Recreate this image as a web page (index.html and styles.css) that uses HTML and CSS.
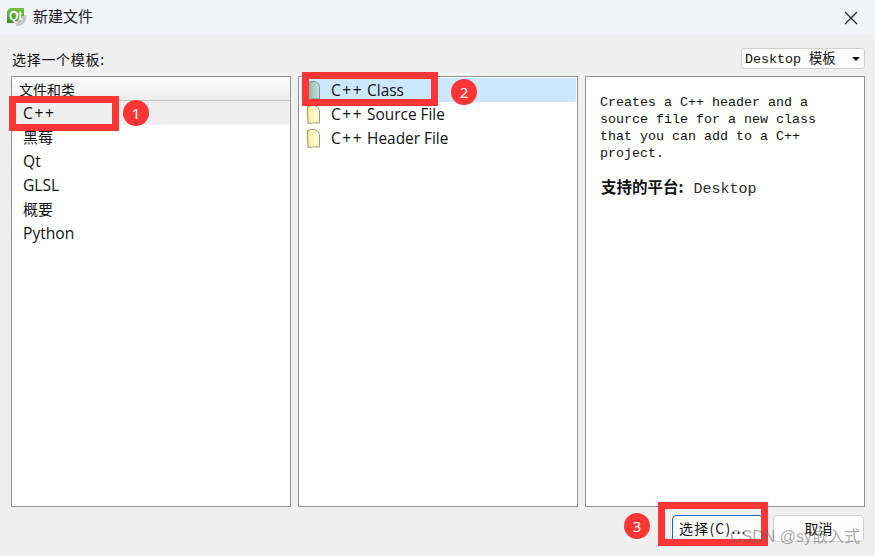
FILE: index.html
```html
<!DOCTYPE html>
<html lang="zh">
<head>
<meta charset="utf-8">
<title>新建文件</title>
<link rel="stylesheet" href="styles.css">
</head>
<body>
<svg class="defs" width="0" height="0">
  <defs>
    <linearGradient id="yellow" x1="0" y1="0" x2="1" y2="0">
      <stop offset="0" stop-color="#e9d890"/><stop offset="0.3" stop-color="#fbf7b4"/><stop offset="1" stop-color="#fffde6"/>
    </linearGradient>
    <linearGradient id="teal" x1="0" y1="0" x2="1" y2="0">
      <stop offset="0" stop-color="#7fb08f"/><stop offset="0.45" stop-color="#a5c9bc"/><stop offset="1" stop-color="#c3dfe8"/>
    </linearGradient>
    <linearGradient id="green" x1="0" y1="0" x2="0" y2="1">
      <stop offset="0" stop-color="#78c044"/><stop offset="1" stop-color="#3f8f24"/>
    </linearGradient>
  </defs>
</svg>
<div class="dialog">
  <header class="titlebar">
    <svg class="qt-logo" width="20" height="20" viewBox="0 0 20 20">
      <path d="M3 1H17V12L13 16H0V4Z" fill="url(#green)"/>
      <path d="M9 19C9 13 13 9 19.5 8C20 14 16 20 9 19Z" fill="#c4c8c2"/>
      <text x="2" y="12.5" class="qt-text">Qt</text>
    </svg>
    <span class="title">新建文件</span>
    <svg class="close" width="14" height="14" viewBox="0 0 14 14"><path d="M1 1L13 13M13 1L1 13" stroke="#222" stroke-width="1.1" fill="none"/></svg>
  </header>
  <main class="content">
    <div class="toprow">
      <span class="choose">选择一个模板:</span>
      <div class="combo"><span>Desktop 模板</span><i class="arrow"></i></div>
    </div>
    <div class="panels">
      <section class="panel">
        <div class="panel-head">文件和类</div>
        <ul class="cats">
          <li class="cat-active"><span class="cpp">C++</span></li>
          <li class="cjk">黑莓</li>
          <li>Qt</li>
          <li>GLSL</li>
          <li class="cjk">概要</li>
          <li>Python</li>
        </ul>
      </section>
      <section class="panel panel-files">
        <ul class="files">
          <li class="file-active"><svg class="doc" width="15" height="21" viewBox="0 0 15 21"><path d="M1.5 2.5Q5 1 9 1.5Q13 3 13.5 6.5V19Q7 18.5 2 19.5Q1 11 1.5 2.5Z" fill="url(#teal)" stroke="#7d9488"/></svg><span class="file-name"><span class="cpp">C++</span> Class</span></li>
          <li><svg class="doc" width="15" height="21" viewBox="0 0 15 21"><path d="M1.5 2.5Q5 1 9 1.5Q13 3 13.5 6.5V19Q7 18.5 2 19.5Q1 11 1.5 2.5Z" fill="url(#yellow)" stroke="#a8986e"/></svg><span class="file-name"><span class="cpp">C++</span> Source File</span></li>
          <li><svg class="doc" width="15" height="21" viewBox="0 0 15 21"><path d="M1.5 2.5Q5 1 9 1.5Q13 3 13.5 6.5V19Q7 18.5 2 19.5Q1 11 1.5 2.5Z" fill="url(#yellow)" stroke="#a8986e"/></svg><span class="file-name"><span class="cpp">C++</span> Header File</span></li>
        </ul>
      </section>
      <section class="panel panel-desc">
        <p class="desc">Creates a C++ header and a<br>source file for a new class<br>that you can add to a C++<br>project.</p>
        <p class="platform"><b>支持的平台:</b><span class="platform-name">Desktop</span></p>
      </section>
    </div>
    <div class="buttons">
      <button class="btn btn-primary">选择(C)...</button>
      <button class="btn">取消</button>
    </div>
  </main>
  <div class="mark mark-1"></div>
  <div class="mark mark-2"></div>
  <div class="mark mark-3"></div>
  <div class="badge badge-1">1</div>
  <div class="badge badge-2">2</div>
  <div class="badge badge-3">3</div>
  <div class="watermark">CSDN @sy嵌入式</div>
</div>
</body>
</html>
```
FILE: styles.css
```css
* { box-sizing: border-box; }
html, body { margin: 0; padding: 0; }
body { width: 875px; height: 556px; overflow: hidden; font-family: "Open Sans", "Noto Sans CJK SC", sans-serif; color: #111; }
.defs { position: absolute; }
.dialog { position: relative; width: 875px; height: 556px; display: flex; flex-direction: column; background: #f0f0f0; }
.titlebar { height: 35px; flex: none; background: #f3f4f9; display: flex; align-items: center; padding: 0 17px 0 7px; }
.qt-logo { flex: none; margin-bottom: 2px; }
.qt-text { font: bold 12px "Liberation Sans", sans-serif; fill: #fff; }
.title { margin-left: 6px; margin-bottom: 4px; font: 15px/20px "Noto Sans CJK SC", sans-serif; color: #1a1a1a; }
.close { margin-left: auto; }
.content { flex: 1; display: flex; flex-direction: column; padding: 13px 10px 0 11px; }
.toprow { height: 28px; flex: none; display: flex; justify-content: space-between; align-items: flex-start; }
.choose { font: 14px/20px "Noto Sans CJK SC", sans-serif; margin-top: 1px; margin-left: 1px; letter-spacing: 0.7px; }
.combo { width: 124px; height: 21px; border: 1px solid #d0d0d0; border-radius: 3px; background: #fdfdfd; display: flex; align-items: center; justify-content: space-between; padding: 1px 4px 0 3px; font: 13.33px/19px "Liberation Mono", "Noto Sans CJK SC", monospace; }
.arrow { width: 0; height: 0; border-left: 4px solid transparent; border-right: 4px solid transparent; border-top: 4px solid #111; }
.panels { height: 431px; flex: none; display: flex; gap: 7px; }
.panel { width: 280px; background: #fff; border: 1px solid #8f9299; }
.panel-head { height: 24px; padding-left: 7px; font-size: 14px; line-height: 25px; background: linear-gradient(#fff, #ececec); border-bottom: 1px solid #c4c4c4; }
.cats, .files { list-style: none; margin: 0; padding: 0; }
.cats li { height: 24px; padding-left: 11px; font-size: 15.6px; line-height: 24px; }
.cats .cjk { font-size: 15px; }
.cpp { letter-spacing: 1.6px; }
.cats .cat-active { background: #efefef; }
.files { padding: 1px 1px 0 2px; }
.files li { height: 24px; display: flex; align-items: center; padding-left: 5px; font-size: 15.4px; line-height: 24px; }
.file-name { padding-top: 2px; }
.files .file-active { background: #cce8ff; border-radius: 0 0 2px 2px; }
.doc { flex: none; margin-right: 10px; }
.panel-desc { padding: 17px 10px 0 14px; font: 13.33px/17px "Liberation Mono", "Noto Sans CJK SC", monospace; }
.desc { margin: 0; }
.platform { margin: 16px 0 0; display: flex; align-items: baseline; }
.platform b { font-family: "Noto Sans CJK SC", sans-serif; font-size: 15.5px; margin-left: 1px; }
.platform-name { margin-left: 10px; font-size: 15px; color: #2b2b2b; }
.buttons { display: flex; justify-content: flex-end; gap: 10px; padding-top: 8px; padding-right: 1px; }
.btn { width: 91px; height: 27px; border: 1px solid #d0d0d0; border-radius: 4px; background: #fdfdfd; font: 14px/22px "Noto Sans CJK SC", sans-serif; color: #111; padding: 0 0 2px; }
.btn-primary { border: 1.5px solid #0a6cc4; text-align: left; padding-left: 6px; letter-spacing: 1.2px; }
.mark { position: absolute; border: 7px solid #fc3535; }
.mark-1 { left: 9px; top: 96px; width: 110px; height: 35px; }
.mark-2 { left: 302px; top: 72px; width: 136px; height: 34px; }
.mark-3 { left: 658px; top: 502px; width: 110px; height: 44px; }
.badge { position: absolute; width: 26px; height: 26px; border-radius: 50%; background: #fc3535; color: #fff; font: 15px/26px "Noto Sans", sans-serif; text-align: center; }
.badge-1 { left: 123px; top: 100px; }
.badge-2 { left: 451px; top: 79px; }
.badge-3 { left: 624px; top: 513px; }
.watermark { position: absolute; left: 730px; top: 526px; font: 16px/22px "Liberation Sans", "Noto Sans CJK SC", sans-serif; color: rgba(100, 100, 100, 0.55); white-space: nowrap; }
```
